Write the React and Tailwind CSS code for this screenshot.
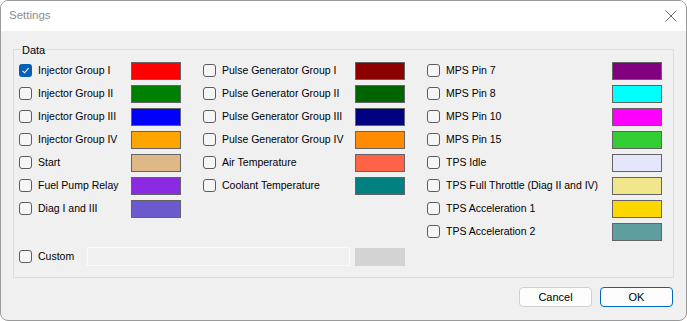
const columns = [
    [
        { label: 'Injector Group I', color: '#ff0000', checked: true },
        { label: 'Injector Group II', color: '#008000' },
        { label: 'Injector Group III', color: '#0000ff' },
        { label: 'Injector Group IV', color: '#ffa500' },
        { label: 'Start', color: '#deb887' },
        { label: 'Fuel Pump Relay', color: '#8a2be2' },
        { label: 'Diag I and III', color: '#6a5acd' },
    ],
    [
        { label: 'Pulse Generator Group I', color: '#8b0000' },
        { label: 'Pulse Generator Group II', color: '#006400' },
        { label: 'Pulse Generator Group III', color: '#000080' },
        { label: 'Pulse Generator Group IV', color: '#ff8c00' },
        { label: 'Air Temperature', color: '#ff6347' },
        { label: 'Coolant Temperature', color: '#008080' },
    ],
    [
        { label: 'MPS Pin 7', color: '#800080' },
        { label: 'MPS Pin 8', color: '#00ffff' },
        { label: 'MPS Pin 10', color: '#ff00ff' },
        { label: 'MPS Pin 15', color: '#32cd32' },
        { label: 'TPS Idle', color: '#e6e6fa' },
        { label: 'TPS Full Throttle (Diag II and IV)', color: '#f0e68c' },
        { label: 'TPS Acceleration 1', color: '#ffd700' },
        { label: 'TPS Acceleration 2', color: '#5f9ea0' },
    ],
];

const widths = ['w-[162px]', 'w-[202px]', 'w-[235px]'];

const CheckBox = ({ checked }) =>
    checked ? (
        <span className="w-[13px] h-[13px] shrink-0 rounded-[3px] bg-[#005fb8] flex items-center justify-center">
            <svg width="9" height="9" viewBox="0 0 9 9">
                <path d="M1.5 4.8 L3.6 6.8 L7.6 2.2" fill="none" stroke="#fff" strokeWidth="1.1" />
            </svg>
        </span>
    ) : (
        <span className="w-[13px] h-[13px] shrink-0 rounded-[3px] border border-[#5d5d5d] bg-[#f6f6f6]" />
    );

const Row = ({ label, color, checked }) => (
    <div className="h-[23px] flex items-center">
        <CheckBox checked={checked} />
        <span className="ml-[6px] flex-1 whitespace-nowrap">{label}</span>
        <span className="w-[50px] h-[18px] border border-[#646464]" style={{ backgroundColor: color }} />
    </div>
);

const App = () => {
    return (
        <div className="w-[687px] h-[321px] bg-[#f0f0f0] border border-[#9a9a9a] rounded-[8px] overflow-hidden flex flex-col font-['Liberation_Sans',Arial,sans-serif] text-[10.5px] text-black">
            <div className="h-[30px] bg-white flex items-center justify-between pl-[8px] pr-[9px] shrink-0">
                <span className="text-[11.5px] text-[#8e8e8e]">Settings</span>
                <svg width="12" height="12" viewBox="0 0 12 12">
                    <path d="M0.5 0.5 L11.5 11.5 M11.5 0.5 L0.5 11.5" stroke="#5a5a5a" strokeWidth="0.9" />
                </svg>
            </div>

            <div className="px-[12px] pt-[18px]">
                <div className="relative h-[229px] border border-[#dcdcdc] pl-[5px] pt-[9px]">
                    <span className="absolute -top-[8px] left-[7px] px-[1px] bg-[#f0f0f0] text-[11px]">Data</span>
                    <div className="flex gap-[22px]">
                        {columns.map((col, i) => (
                            <div key={i} className={`${widths[i]} flex flex-col`}>
                                {col.map((item) => (
                                    <Row key={item.label} {...item} />
                                ))}
                            </div>
                        ))}
                    </div>
                    <div className="h-[23px] mt-[2px] flex items-center">
                        <CheckBox />
                        <span className="ml-[6px] w-[49px]">Custom</span>
                        <span className="w-[263px] h-[19px] border border-[#fafafa]" />
                        <span className="ml-[5px] w-[50px] h-[18px] bg-[#d3d3d3]" />
                    </div>
                </div>
            </div>

            <div className="flex justify-end gap-[8px] pr-[13px] mt-[9px]">
                <button className="w-[73px] h-[20px] bg-[#fdfdfd] border border-[#d0d0d0] rounded-[4px] text-[11px]">Cancel</button>
                <button className="w-[73px] h-[20px] bg-[#fdfdfd] border border-[#0067c0] rounded-[4px] text-[11px]">OK</button>
            </div>
        </div>
    );
};

export default App;
